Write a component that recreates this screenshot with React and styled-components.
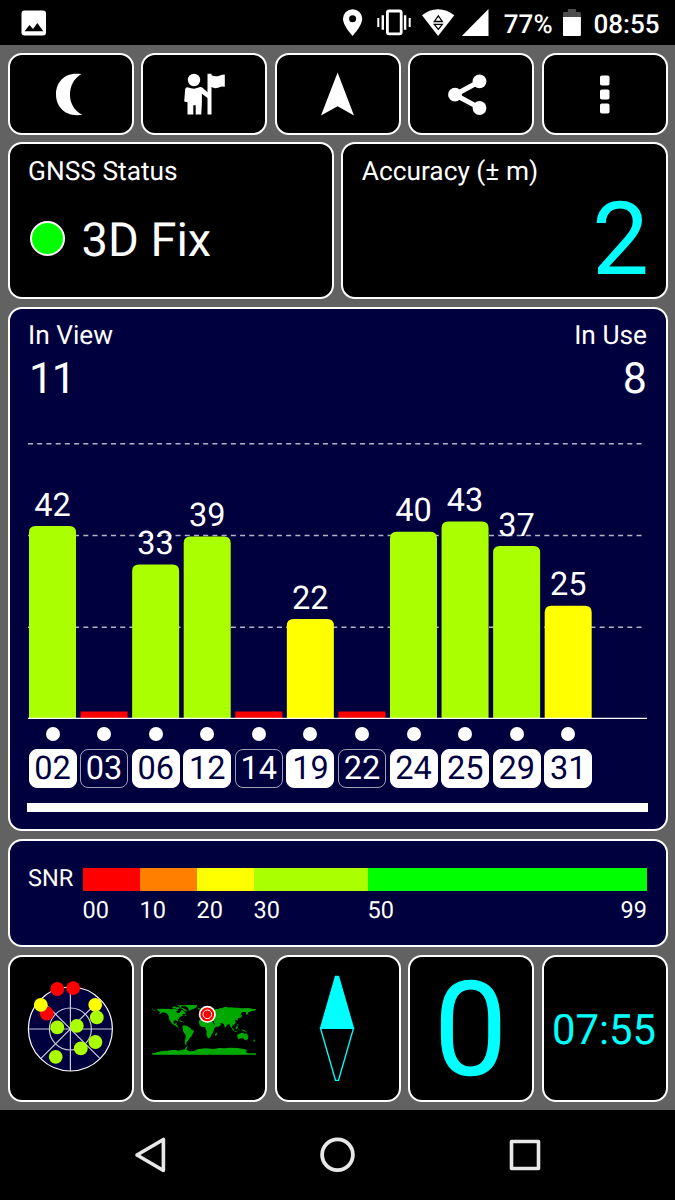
import React from 'react';
import styled, { createGlobalStyle } from 'styled-components';

const GlobalStyle = createGlobalStyle`
    body {
        margin: 0;
        background: #000;
        font-family: Roboto, "Noto Sans", sans-serif;
        color: #fff;
        text-rendering: geometricPrecision;
    }
`;

// Layout
const Screen = styled.div`
    display: flex;
    flex-direction: column;
    width: 675px;
    height: 1200px;
    overflow: hidden;
`;

const StatusBar = styled.header`
    display: flex;
    align-items: center;
    justify-content: space-between;
    box-sizing: border-box;
    height: 45px;
    padding: 0 15.5px 0 21px;
    background: #000;
`;

const StatusGroup = styled.div`
    display: flex;
    align-items: center;
`;

const StatusText = styled.span`
    font-size: 26px;
    font-weight: 500;
    line-height: 30px;
    padding-top: 4px;
    margin-left: ${({ $gap }) => $gap}px;
`;

const Dashboard = styled.main`
    display: flex;
    flex-direction: column;
    gap: 7.6px;
    box-sizing: border-box;
    height: 1065px;
    padding: 7.5px;
    background: #626262;
`;

const Row = styled.div`
    display: flex;
    gap: 7.5px;
    height: ${({ $height }) => $height}px;
`;

const Panel = styled.section`
    flex: 1 1 0;
    box-sizing: border-box;
    min-width: 0;
    padding: ${({ $top }) => $top || 0}px 18.5px 0;
    border: 2px solid #fff;
    border-radius: 14px;
    background: ${({ $navy }) => ($navy ? '#00003f' : '#000')};
`;

const Tile = styled.button`
    display: flex;
    flex: 1 1 0;
    align-items: center;
    justify-content: center;
    box-sizing: border-box;
    min-width: 0;
    padding: 0 1px 0 0;
    border: 2px solid #fff;
    border-radius: 14px;
    background: #000;
    color: #00ffff;
    font-family: inherit;
    text-rendering: inherit;
`;

const Title = styled.div`
    font-size: 26.3px;
    line-height: 30px;
    white-space: nowrap;
`;

const Fix = styled.div`
    display: flex;
    align-items: center;
    gap: 16.5px;
    margin-top: 26px;
    padding-left: 2px;
    font-size: 47px;
    line-height: 56px;
`;

const FixDot = styled.span`
    box-sizing: border-box;
    width: 35px;
    height: 35px;
    margin-bottom: 4px;
    border: 2px solid #fff;
    border-radius: 50%;
    background: #00ff00;
`;

const Accuracy = styled.div`
    margin: -1.5px -2px 0 0;
    color: #00ffff;
    font-size: 101.5px;
    line-height: 110px;
    text-align: right;
`;

const Split = styled.div`
    display: flex;
    justify-content: space-between;
`;

const Count = styled.div`
    margin: 3px 0 0 1px;
    font-size: 43px;
    line-height: 50px;
    letter-spacing: ${({ $right }) => ($right ? 0 : '-1.5px')};
    text-align: ${({ $right }) => ($right ? 'right' : 'left')};
`;

const Plot = styled.svg`
    display: block;
    width: 619px;
    height: 320px;
    margin-top: -1px;
    overflow: visible;
`;

const Satellites = styled.div`
    display: grid;
    grid-template-columns: repeat(12, 1fr);
    margin: 4px -0.5px 0 0.5px;
`;

const Satellite = styled.div`
    display: flex;
    flex-direction: column;
    align-items: center;
    gap: 8px;
    width: 48px;
`;

const Dot = styled.span`
    width: 14px;
    height: 14px;
    border-radius: 50%;
    background: #fff;
`;

const Chip = styled.span`
    box-sizing: border-box;
    width: 48px;
    height: 39px;
    border: 1px solid ${({ $used }) => ($used ? '#fff' : '#a0a0b4')};
    border-radius: 8px;
    background: ${({ $used }) => ($used ? '#fff' : 'transparent')};
    color: ${({ $used }) => ($used ? '#00003f' : '#fff')};
    font-size: 32.5px;
    line-height: 37px;
    text-align: center;
`;

const ScrollTrack = styled.div`
    height: 9px;
    margin: 15px -1px 0;
    background: #fff;
`;

const Scale = styled.div`
    display: flex;
    font-size: 23.5px;
`;

const ScaleName = styled.div`
    width: 54.5px;
    line-height: 20px;
`;

const ScaleSteps = styled.div`
    display: flex;
    flex: 1;
`;

const Step = styled.div`
    flex: ${({ $span }) => $span} 1 0;
    min-width: 0;
`;

const StepColor = styled.div`
    height: 23px;
    background: ${({ $color }) => $color};
`;

const StepLabels = styled.div`
    display: flex;
    justify-content: space-between;
    margin-top: 5px;
    line-height: 28px;
`;

const Speed = styled.span`
    padding-top: 6px;
    font-size: 132px;
    line-height: 140px;
`;

const Clock = styled.span`
    padding-top: 6px;
    font-size: 41.8px;
    line-height: 50px;
`;

const NavBar = styled.nav`
    display: flex;
    align-items: center;
    justify-content: space-between;
    height: 90px;
    padding: 0 132px;
    background: #000;
`;

// Data
const GREEN = '#aaff00';
const YELLOW = '#ffff00';
const RED = '#ff0000';

const satellites = [
    { id: '02', snr: 42, level: 192.3, color: GREEN, used: true },
    { id: '03', snr: null, level: 7, color: RED, used: false },
    { id: '06', snr: 33, level: 153.8, color: GREEN, used: true },
    { id: '12', snr: 39, level: 182, color: GREEN, used: true },
    { id: '14', snr: null, level: 7, color: RED, used: false },
    { id: '19', snr: 22, level: 99.4, color: YELLOW, used: true },
    { id: '22', snr: null, level: 7, color: RED, used: false },
    { id: '24', snr: 40, level: 186.7, color: GREEN, used: true },
    { id: '25', snr: 43, level: 197, color: GREEN, used: true },
    { id: '29', snr: 37, level: 172.4, color: GREEN, used: true },
    { id: '31', snr: 25, level: 112.7, color: YELLOW, used: true },
];

const steps = [
    { labels: ['00'], color: RED, span: 57 },
    { labels: ['10'], color: '#ff8000', span: 57 },
    { labels: ['20'], color: YELLOW, span: 57 },
    { labels: ['30'], color: GREEN, span: 114 },
    { labels: ['50', '99'], color: '#00ff00', span: 279.5 },
];

const skyDots = [
    [57.3, 39, RED],
    [73.2, 38.2, RED],
    [46.8, 63.5, RED],
    [40.8, 54.8, YELLOW],
    [95.2, 54.8, YELLOW],
    [96.8, 67.4, GREEN],
    [57.3, 77.4, GREEN],
    [76.8, 75.8, GREEN],
    [95.4, 92, GREEN],
    [80.8, 98.4, GREEN],
    [55.7, 106.8, GREEN],
];

// Bars
const BASE = 315.4;

function barPath(x, h) {
    const r = h > 12 ? 6.5 : 0;
    const top = BASE - h;
    return `M${x} ${BASE}V${top + r}q0 ${-r} ${r} ${-r}h${47 - 2 * r}q${r} 0 ${r} ${r}V${BASE}z`;
}

function SnrChart() {
    return (
        <Plot viewBox="0 0 619 320">
            {[40.7, 132.5, 224.2].map((y) => (
                <line key={y} x1="0" x2="614.5" y1={y} y2={y} stroke="#b4b4c6" strokeWidth="1.5" strokeDasharray="5 4.22" />
            ))}
            {satellites.map(({ id, snr, level, color }, i) => {
                const x = 1 + i * 51.57;
                return (
                    <g key={id}>
                        <path d={barPath(x, level)} fill={color} />
                        {snr && (
                            <text x={x + 23.5} y={BASE - level - 10.3} fill="#fff" fontSize="32.5" textAnchor="middle">
                                {snr}
                            </text>
                        )}
                    </g>
                );
            })}
            <line x1="0" x2="619" y1={BASE} y2={BASE} stroke="#fff" strokeWidth="1.2" />
        </Plot>
    );
}

// Status bar icons
function StatusIcons() {
    return (
        <svg width="148" height="45" viewBox="340.7 0 148 45" fill="#fff">
            <path fillRule="evenodd" d="M352.3 9.2a9.6 9.6 0 0 0-9.6 9.6c0 7 9.6 17.2 9.6 17.2s9.6-10.2 9.6-17.2a9.6 9.6 0 0 0-9.6-9.6zm0 6a3.5 3.5 0 1 1 0 7 3.5 3.5 0 0 1 0-7z" />
            <path d="M377 18h2v9h-2zM381.300 15.300h2.400v14.400h-2.400zM403.600 15.300h2.400v14.400h-2.400zM408.400 18h2v9h-2z" />
            <rect x="387.100" y="11" width="13.800" height="22.800" rx="1.500" fill="none" stroke="#fff" strokeWidth="2.800" />
            <path d="M421.700 15.200C426.500 11.200 432 9.200 437.800 9.200s11.300 2 16.200 6L437.800 36z" />
            <path d="M438 15.800l4 5.700h-8zM438 29.300l4-4.900h-8z" fill="none" stroke="#000" strokeWidth="1.300" />
            <path d="M461.500 36L488.200 9v27z" />
        </svg>
    );
}

function Battery() {
    return (
        <svg width="19" height="28" viewBox="0.600 0 19 28" style={{ marginLeft: 10 }}>
            <path d="M5.500 0h8v3h4q1 0 1 1v4H.5V4q0-1 1-1h4z" fill="#4d4d4d" />
            <path d="M.5 8h18v18q0 1-1 1h-16q-1 0-1-1z" fill="#fff" />
        </svg>
    );
}

// Bottom row drawings
function SkyPlot() {
    return (
        <svg width="121" height="143" viewBox="10 7 121 143">
            <circle cx="70.4" cy="79" r="42" fill="#00003f" stroke="#fff" strokeWidth="1.200" />
            <g fill="none" stroke="#c8c8d8" strokeWidth="1.200">
                <circle cx="70.4" cy="79" r="21" />
                <path d="M28.400 79h84M70.400 37v84M40.700 108.700l59.400-59.400M40.700 49.300l59.400 59.400" />
            </g>
            {skyDots.map(([x, y, color]) => (
                <circle key={`${x}-${y}`} cx={x} cy={y} r="6.9" fill={color} />
            ))}
        </svg>
    );
}

function WorldMap() {
    return (
        <svg width="121" height="143" viewBox="24 -84 363 429">
            <g fill="#00a800">
                <path d="M66 72l5-1 2 2 4-2 10 0 6 1 8-1 6 2 6 0 5-2 6 3 4-2 2 4-6 3 2 4 6 2 4-5 4-6 6 4 3 4 5 3-5 2-8 1 4 3-4 2-6 3-3 4-4 4 1 4-2 2-4-4-6 1-2 4 2 5 5-1 2-2 2 1-3 5 4 0 1 5 4 3-2 1-7-4-4-3-6-3-4-5-5-7-2-6-1-6-3-6-5-4-8-2-6 2-4 3-2-2 2-3-4-4z" />
                <path d="M52 71h3v3h-3zM56 75h3v3h-3zM112 66l6-2 6 3 7 0 2 4-6 2-8-3-6 1zM126 61h22v3h-8l-6 3-4-3zM135 66l8 3 8 4 5 5-3 2-6-3-4-5-8-3zM150 89l6 2-4 2-4-2z" />
                <path d="M148 60h39l-2 5-2 4-7 2-7 3-4 3-4-3-2-5-4-4-7-1zM188 70h8l-2 4-6-1z" />
                <path d="M132 106l7 1 5 3-3 1-8-3zM144 110l5 1-3 2z" />
                <path d="M142 124l5-3 8 1 6 4 5 3 3 5 8 3-1 5-4 5-2 7-5 4-3 5-3 4-4 4-1 4 1 4-3 0-3-4 1-8 2-10 0-7-4-5-4-7 0-6-2-5z" />
                <path d="M193 104l7-3 10 1 8 2 10 0 4 5 5 10 8 0-2 6-6 6-1 7-3 6-3 3-1 6-5 6-5 1-3-6-2-8 1-7-3-6-2-7-10 0-6-5-2-8z" />
                <path d="M243 144l4-3-2 9-4 3-1-5z" />
                <path d="M195 101l-1-8 7-1 3-6 5-3 2-7 8-6 5 0 4 5 6 0 5-2 6-1 6 0 4-3 6 1 7-4 6-1 7 3 9-1 8 1 10 0 9 2 10 0 10-1 8 1 9 2 8 0 1 3-5 2-7 1-5 2-6 2-1 5-4 3-2-5-2-4-7 0-5 2-2 6 1 4-4 5-5 1-1 7-3 1-1-3-4 1 2 6-2 6-6 3-3 3 1 7-3-2-4-5-2-5-4 0-5 5-2 5-3-3-3-8-5-2-6 0 3 5-5 4-7 3-5-6-4-8 0-5-10 0-3-3 8-4-8-3-4 4-4-4-5 1-4 5z" />
                <path d="M314 96l4-3 2-5 2 4-3 5-6 3zM291 128l4 3 4 5-3 2-5-6zM302 126l5-4 2 3-3 8-4-1zM310 133h3l-1 6zM296 119l3 2-2 4zM307 116l3 2 0 5-3-2zM319 133l6 1 6 3 4 4-5-1-9-4zM299 139h8v2h-8z" />
                <path d="M306 150l7-4 7-3 5 0 3 4 3 0 2-5 2 4 5 8-1 7-5 4-6-1-3-4-8 0-8 3z" />
                <path d="M333 163l3 2-3 2zM358 163l3 3-5 5-2-1zM344 141l3 2-2 1z" />
                <path d="M52 208v-3l8-1 7-3 12-2 11-2 8 1 12-3 14 0 5 2 12-2 8-2 3-5 4-5 3-1-3 6-1 6 6 4 14 1 6-3 10-4 20-2 24 2 18-3 15 1 16-2 24 1 14 2 9 2 5 3-3 5 8 5v2z" />
                <path d="M52 205h311v4h-311z" />
            </g>
            <circle cx="217" cy="88" r="25.500" fill="#fff" />
            <circle cx="217" cy="88" r="20.500" fill="#ff0000" />
            <circle cx="217" cy="88" r="13" fill="none" stroke="#fff" strokeWidth="3" />
        </svg>
    );
}

function Compass() {
    return (
        <svg width="36" height="106" viewBox="0 -0.300 36 106" fill="none" stroke="#00ffff" strokeWidth="1.300">
            <path d="M16.500 1h3L34.500 53h-33z" fill="#00ffff" />
            <path d="M1.500 53h33L19.500 105h-3z" />
        </svg>
    );
}

function App() {
    return (
        <Screen>
            <GlobalStyle />
            <StatusBar>
                <svg width="26" height="26" viewBox="0 0 26 26">
                    <rect x=".5" y="0.500" width="24.500" height="25" rx="3" fill="#fff" />
                    <path d="M3.500 21.200l5-6.200 3.500 4 4.300-6 6 8.200z" fill="#000" />
                </svg>
                <StatusGroup>
                    <StatusIcons />
                    <StatusText $gap={15}>77%</StatusText>
                    <Battery />
                    <StatusText $gap={12}>08:55</StatusText>
                </StatusGroup>
            </StatusBar>

            <Dashboard>
                <Row $height={82.3}>
                    <Tile aria-label="Night mode">
                        <svg width="121" height="78" viewBox="10 54.500 121 78" fill="#fff">
                            <path d="M81.500 73.500C63 71 56 83 56 94s8 23 26.500 20.300C66 107 66 82 81.500 73.500z" />
                        </svg>
                    </Tile>
                    <Tile aria-label="Guide">
                        <svg width="121" height="78" viewBox="143 54.500 121 78" fill="#fff">
                            <circle cx="194" cy="79.500" r="6.200" />
                            <path d="M187.500 86.800q3.500 1 6.500 1.500 3-.5 6-1.700 1.500-.2 2.500.7l5 4.400V73.200h4v1.600q4 2 8.300.2 2.500-1 5-1v12.300q-3-1-6 .6-4 1.800-7.300-.3V114h-4V97.500l-5.600-4.200V101.500l-.6 12.500h-5.600v-9.200h-2.400v9.200h-5.800V101.800l-3.300-.8 1-12.500q.4-1.800 2.300-1.700z" />
                        </svg>
                    </Tile>
                    <Tile aria-label="Navigate">
                        <svg width="121" height="78" viewBox="277 54.500 121 78" fill="#fff">
                            <path d="M337.600 72l16.400 43-16.400-9.200L321 115z" />
                        </svg>
                    </Tile>
                    <Tile aria-label="Share">
                        <svg width="121" height="78" viewBox="410 54.500 121 78" fill="#fff">
                            <path d="M479.500 81L455 94.200l24.500 13.200" fill="none" stroke="#fff" strokeWidth="5" />
                            <circle cx="479.500" cy="80.800" r="6.900" />
                            <circle cx="455" cy="94.200" r="6.900" />
                            <circle cx="479.500" cy="107.500" r="6.900" />
                        </svg>
                    </Tile>
                    <Tile aria-label="Menu">
                        <svg width="121" height="78" viewBox="544 54.500 121 78" fill="#fff">
                            <rect x="600" y="75" width="9.500" height="10" rx="1.800" />
                            <rect x="600" y="89" width="9.500" height="10" rx="1.800" />
                            <rect x="600" y="103" width="9.500" height="10" rx="1.800" />
                        </svg>
                    </Tile>
                </Row>

                <Row $height={157}>
                    <Panel $top={12.3}>
                        <Title>GNSS Status</Title>
                        <Fix>
                            <FixDot />
                            3D Fix
                        </Fix>
                    </Panel>
                    <Panel $top={12.3}>
                        <Title>Accuracy (± m)</Title>
                        <Accuracy>2</Accuracy>
                    </Panel>
                </Row>

                <Row $height={524}>
                    <Panel $navy $top={12}>
                        <Split>
                            <div>
                                <Title>In View</Title>
                                <Count>11</Count>
                            </div>
                            <div>
                                <Title>In Use</Title>
                                <Count $right>8</Count>
                            </div>
                        </Split>
                        <SnrChart />
                        <Satellites>
                            {satellites.map(({ id, used }) => (
                                <Satellite key={id}>
                                    <Dot />
                                    <Chip $used={used}>{id}</Chip>
                                </Satellite>
                            ))}
                        </Satellites>
                        <ScrollTrack />
                    </Panel>
                </Row>

                <Row $height={108.6}>
                    <Panel $navy $top={27.3}>
                        <Scale>
                            <ScaleName>SNR</ScaleName>
                            <ScaleSteps>
                                {steps.map(({ labels, color, span }) => (
                                    <Step key={color} $span={span}>
                                        <StepColor $color={color} />
                                        <StepLabels>
                                            {labels.map((label) => (
                                                <span key={label}>{label}</span>
                                            ))}
                                        </StepLabels>
                                    </Step>
                                ))}
                            </ScaleSteps>
                        </Scale>
                    </Panel>
                </Row>

                <Row $height={147.2}>
                    <Tile aria-label="Sky view">
                        <SkyPlot />
                    </Tile>
                    <Tile aria-label="World map">
                        <WorldMap />
                    </Tile>
                    <Tile aria-label="Compass">
                        <Compass />
                    </Tile>
                    <Tile>
                        <Speed>0</Speed>
                    </Tile>
                    <Tile>
                        <Clock>07:55</Clock>
                    </Tile>
                </Row>
            </Dashboard>

            <NavBar>
                <svg width="36" height="40" viewBox="0 0 36 40" fill="none" stroke="#e8e8e8" strokeWidth="3.600" strokeLinejoin="round">
                    <path d="M31.400 4.500v31L5 20z" />
                </svg>
                <svg width="36" height="40" viewBox="0.500 0 36 40" fill="none" stroke="#e8e8e8" strokeWidth="3.800">
                    <circle cx="18" cy="19.700" r="15.400" />
                </svg>
                <svg width="36" height="40" viewBox="0 0 36 40" fill="none" stroke="#e8e8e8" strokeWidth="3.600" strokeLinejoin="round">
                    <rect x="4.500" y="6.500" width="27" height="27" />
                </svg>
            </NavBar>
        </Screen>
    );
}

export default App;
